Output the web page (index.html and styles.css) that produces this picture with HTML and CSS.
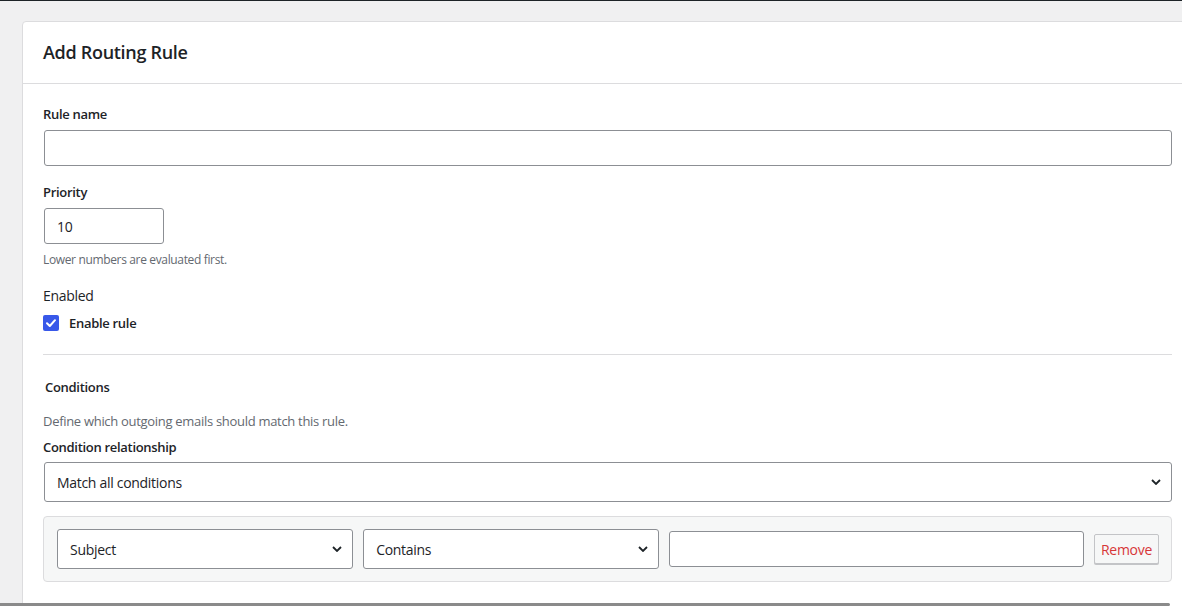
FILE: index.html
```html
<!DOCTYPE html>
<html lang="en">
<head>
    <meta charset="UTF-8">
    <meta name="viewport" content="width=device-width, initial-scale=1.0">
    <title>Add Routing Rule</title>
    <link rel="stylesheet" href="styles.css">
</head>
<body>
    <div class="topbar"></div>
    <div class="wrap">
        <div class="card">
            <div class="card-header">
                <h2>Add Routing Rule</h2>
            </div>
            <form class="card-body" id="ruleForm">
                <label class="field-label" for="ruleName">Rule name</label>
                <input type="text" id="ruleName" class="text-input wide">

                <label class="field-label spaced" for="priority">Priority</label>
                <input type="number" id="priority" class="text-input small" value="10">
                <p class="help">Lower numbers are evaluated first.</p>

                <div class="plain-label">Enabled</div>
                <label class="check-row">
                    <span class="checkbox">
                        <svg width="12" height="12" viewBox="0 0 12 12"><path d="M2 6.3 L4.8 9 L10 3.2" fill="none" stroke="#fff" stroke-width="2" stroke-linecap="round" stroke-linejoin="round"/></svg>
                    </span>
                    <span>Enable rule</span>
                </label>

                <hr class="divider">

                <h3 class="section-title">Conditions</h3>
                <p class="section-desc">Define which outgoing emails should match this rule.</p>

                <label class="field-label tight" for="relationship">Condition relationship</label>
                <div class="select-wrap wide">
                    <select id="relationship" class="select">
                        <option>Match all conditions</option>
                        <option>Match any condition</option>
                    </select>
                    <svg class="chevron" width="10" height="6" viewBox="0 0 10 6"><path d="M1 1 L5 5 L9 1" fill="none" stroke="#1d2327" stroke-width="1.8"/></svg>
                </div>

                <div class="condition-row">
                    <div class="select-wrap">
                        <select class="select">
                            <option>Subject</option>
                            <option>From</option>
                            <option>To</option>
                        </select>
                        <svg class="chevron" width="10" height="6" viewBox="0 0 10 6"><path d="M1 1 L5 5 L9 1" fill="none" stroke="#1d2327" stroke-width="1.8"/></svg>
                    </div>
                    <div class="select-wrap">
                        <select class="select">
                            <option>Contains</option>
                            <option>Equals</option>
                            <option>Starts with</option>
                        </select>
                        <svg class="chevron" width="10" height="6" viewBox="0 0 10 6"><path d="M1 1 L5 5 L9 1" fill="none" stroke="#1d2327" stroke-width="1.8"/></svg>
                    </div>
                    <input type="text" class="text-input">
                    <button type="button" class="remove-btn">Remove</button>
                </div>
            </form>
        </div>
    </div>
    <div class="scroll-thumb"></div>
</body>
</html>
```

FILE: styles.css
```css
html, body {
    margin: 0;
    overflow: hidden;
}
body {
    background: #f0f0f1;
    color: #1d2327;
    font-family: "Open Sans", "Noto Sans", sans-serif;
    font-size: 13px;
    letter-spacing: -0.3px;
}
.topbar {
    height: 1px;
    background: #1d2327;
}
.wrap {
    padding: 20px 0 0 22px;
}
.card {
    width: 1169px;
    background: #fff;
    border: 1px solid #dcdcde;
    border-radius: 4px;
    padding-bottom: 60px;
}
.card-header {
    height: 61px;
    display: flex;
    align-items: center;
    padding: 0 20px;
    border-bottom: 1px solid #dcdcde;
}
.card-header h2 {
    margin: -1px 0 0;
    font-size: 18px;
    font-weight: 600;
}
.card-body {
    display: flex;
    flex-direction: column;
    padding: 20px 20px 0 20px;
}
.field-label {
    display: block;
    font-weight: 600;
    line-height: 20px;
    margin-bottom: 6px;
}
.field-label.spaced {
    margin-top: 16px;
}
.field-label.tight {
    margin-bottom: 5px;
}
.text-input {
    box-sizing: border-box;
    height: 36px;
    padding: 0 12px;
    border: 1px solid #8c8f94;
    border-radius: 3px;
    font-family: inherit;
    font-size: 14px;
    letter-spacing: inherit;
    color: #1d2327;
    background: #fff;
    margin: 0 0 0 1px;
}
.text-input.wide,
.select-wrap.wide {
    width: calc(100% - 1px);
    margin-left: 1px;
}
.text-input.small {
    width: 120px;
}
.help {
    margin: 8px 0 0;
    font-size: 12px;
    line-height: 16px;
    letter-spacing: -0.35px;
    color: #646970;
}
.plain-label {
    margin-top: 18px;
    font-size: 14px;
    line-height: 20px;
}
.check-row {
    display: flex;
    align-items: center;
    gap: 10px;
    height: 24px;
    margin-top: 5px;
    font-weight: 600;
}
.checkbox {
    width: 16px;
    height: 16px;
    border-radius: 2px;
    background: #3858e9;
    display: flex;
    align-items: center;
    justify-content: center;
}
.divider {
    width: 100%;
    margin: 19px 0 0;
    border: 0;
    border-top: 1px solid #dcdcde;
}
.section-title {
    margin: 22px 0 0 2px;
    font-size: 13px;
    font-weight: 600;
    line-height: 20px;
}
.section-desc {
    margin: 14px 0 6px;
    line-height: 20px;
    color: #646970;
}
.select-wrap {
    position: relative;
}
.select {
    appearance: none;
    box-sizing: border-box;
    width: 100%;
    height: 40px;
    padding: 0 32px 0 12px;
    border: 1px solid #8c8f94;
    border-radius: 3px;
    background: #fff;
    font-family: inherit;
    font-size: 14px;
    letter-spacing: inherit;
    color: #1d2327;
    margin: 0;
}
.chevron {
    position: absolute;
    right: 11px;
    top: 17px;
    pointer-events: none;
}
.condition-row {
    margin-top: 14px;
    display: grid;
    grid-template-columns: 1fr 1fr 1.4fr auto;
    gap: 10px;
    align-items: center;
    padding: 12px 12px 12px 13px;
    background: #f6f7f7;
    border: 1px solid #dcdcde;
    border-radius: 4px;
}
.condition-row .text-input {
    width: 100%;
    margin: 0;
}
.remove-btn {
    height: 30px;
    padding: 0 6px;
    border: 1px solid #c3c4c7;
    border-radius: 2px;
    background: #f6f7f7;
    box-shadow: 0 1px 0 #c3c4c7;
    color: #d63638;
    font-family: inherit;
    font-size: 14px;
    letter-spacing: inherit;
}
.scroll-thumb {
    position: fixed;
    left: 0;
    bottom: 0;
    width: 1170px;
    height: 3px;
    background: #8a8a8a;
    border-radius: 0 2px 2px 0;
}
```
